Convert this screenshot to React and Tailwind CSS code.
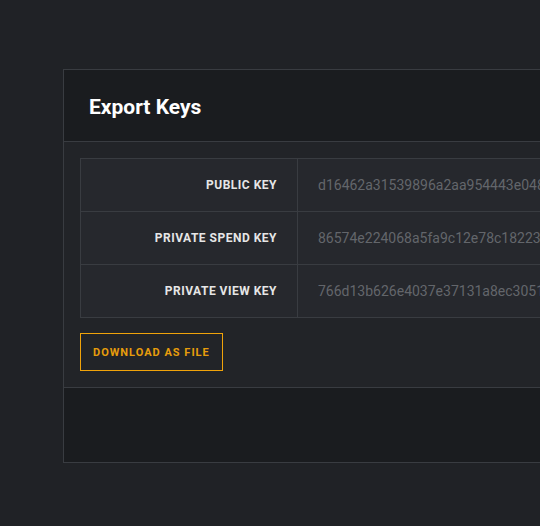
export default function App() {
  const rows = [
    ["PUBLIC KEY", "d16462a31539896a2aa954443e0489c1f0b7a3e56d2c4f8a91e07b3d5c6a2f18"],
    ["PRIVATE SPEND KEY", "86574e224068a5fa9c12e78c182231b9d47e0a6f3c58b21d9e4a7f06c3b8d502"],
    ["PRIVATE VIEW KEY", "766d13b626e4037e37131a8ec30512f8b64d9a0c7e31f5b2a8d604e97c1b3a0d"],
  ];
  return (
    <div
      className="w-[540px] h-[526px] overflow-hidden bg-[#202226] pt-[69px] pl-[63px]"
      style={{ fontFamily: "Roboto, 'Liberation Sans', sans-serif" }}
    >
      <div className="w-[640px] border border-[#393c41] bg-[#222428]">
        <div className="h-[72px] bg-[#1a1c1f] border-b border-[#393c41] flex items-center pl-[25px] pt-[3px]">
          <h1 className="text-[21px] font-bold text-white leading-none">Export Keys</h1>
        </div>
        <div className="px-4 pt-4 pb-4 border-b border-[#393c41]">
          <div className="border-l border-t border-[#393c41] bg-[#26282d]">
            {rows.map(([label, value]) => (
              <div key={label} className="flex h-[53px] border-b border-[#393c41]">
                <div className="w-[217px] shrink-0 border-r border-[#393c41] flex items-center justify-end pr-[20px] text-[12px] font-bold tracking-[0.5px] text-[#e6e6e6]">
                  {label}
                </div>
                <div className="flex items-center pl-[20px] text-[14px] text-[#63666b] whitespace-nowrap overflow-hidden">
                  {value}
                </div>
              </div>
            ))}
          </div>
          <button className="mt-[15px] h-[38px] px-[12px] border border-[#f0a30a] text-[#e79d0c] text-[11px] font-bold tracking-[1px] leading-none">
            DOWNLOAD AS FILE
          </button>
        </div>
        <div className="h-[74px] bg-[#1a1c1f]"></div>
      </div>
    </div>
  );
}
